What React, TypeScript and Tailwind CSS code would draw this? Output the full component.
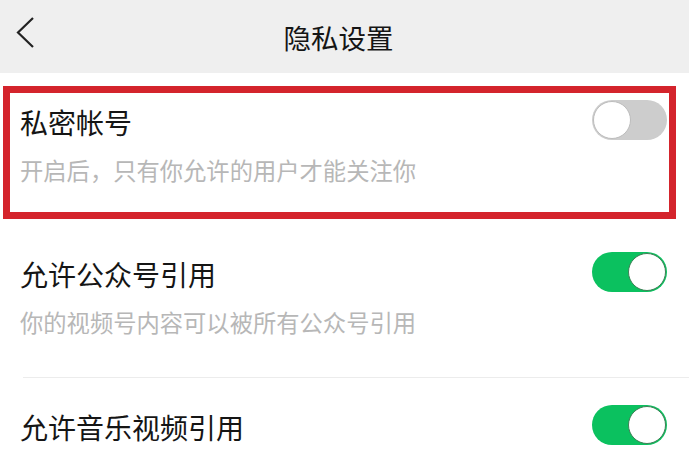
const font = { fontFamily: '"Noto Sans CJK SC", "Noto Sans", sans-serif' };

interface RowProps {
  title: string;
  desc?: string;
  on: boolean;
  divider?: boolean;
  highlight?: boolean;
}

const Toggle = ({ on }: { on: boolean }) => (
  <div
    className={`flex h-[40px] w-[75px] items-center rounded-full p-[1px] ${
      on ? "justify-end bg-[#0bc15f]" : "justify-start bg-[#cdcdcd]"
    }`}
  >
    <div
      className={`h-[38px] w-[38px] rounded-full bg-white border-[1.5px] ${
        on ? "border-[#3f7f56]" : "border-[#bdbdbd]"
      }`}
    />
  </div>
);

const Row = ({ title, desc, on, divider, highlight }: RowProps) => (
  <div className={`relative h-[152px] ${divider ? "border-t border-[#ececec] ml-[23px]" : ""}`}>
    <div className={`flex justify-between ${divider ? "pl-0" : "pl-5"} pr-[22px]`}>
      <div className={`pt-[32px] ${divider ? "-ml-[3px]" : ""}`}>
        <div className="text-[28px] leading-[34px] text-[#151515]">{title}</div>
        {desc && <div className="mt-[17px] text-[23.3px] leading-[28px] text-[#b7b7b7]">{desc}</div>}
      </div>
      <div className="mt-[27px]">
        <Toggle on={on} />
      </div>
    </div>
    {highlight && (
      <div className="absolute left-[3px] right-[13px] top-[13px] h-[133px] border-[7px] border-[#d4242c]" />
    )}
  </div>
);

export default function App() {
  return (
    <div className="h-[454px] w-[689px] overflow-hidden bg-white" style={font}>
      <header className="relative flex h-[73px] items-center justify-center bg-[#efefef]">
        <svg className="absolute left-[15px] top-[16px]" width="22" height="34" viewBox="0 0 22 34">
          <polyline points="18,2 3,16.5 18,31" fill="none" stroke="#222" strokeWidth="2.2" />
        </svg>
        <h1 className="pr-[12px] text-[27.5px] leading-[32px] text-[#151515]">隐私设置</h1>
      </header>
      <Row title="私密帐号" desc="开启后，只有你允许的用户才能关注你" on={false} highlight />
      <Row title="允许公众号引用" desc="你的视频号内容可以被所有公众号引用" on />
      <Row title="允许音乐视频引用" on divider />
    </div>
  );
}
